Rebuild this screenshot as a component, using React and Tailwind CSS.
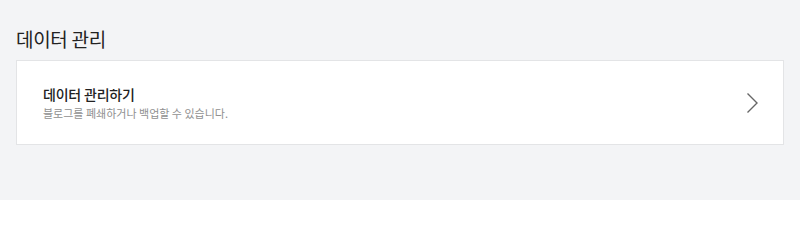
import React from "react";

const App = () => {
  return (
    <div
      className="w-[800px] h-[200px] bg-[#f3f4f6] px-4 pt-[25px]"
      style={{ fontFamily: '"Noto Sans CJK KR", "Noto Sans", sans-serif' }}
    >
      {/* Section title */}
      <h2 className="text-[19px] leading-[27px] text-[#222] tracking-[-0.3px]">
        데이터 관리
      </h2>

      {/* Data management card */}
      <a
        href="#"
        className="mt-[8px] flex items-center justify-between h-[85px] bg-white border border-[#e3e4e6] pl-[26px] pr-[24px]"
      >
        <div className="flex flex-col">
          <span className="text-[14px] leading-[20px] font-medium text-[#222] tracking-[-0.2px]">
            데이터 관리하기
          </span>
          <span className="mt-[1px] text-[11px] leading-[16px] text-[#909090]">
            블로그를 폐쇄하거나 백업할 수 있습니다.
          </span>
        </div>
        <svg width="13" height="22" viewBox="0 0 13 22" fill="none">
          <path d="M1.5 1.5 L11 11 L1.5 20.5" stroke="#666" strokeWidth="1.4" />
        </svg>
      </a>
    </div>
  );
};

export default App;
